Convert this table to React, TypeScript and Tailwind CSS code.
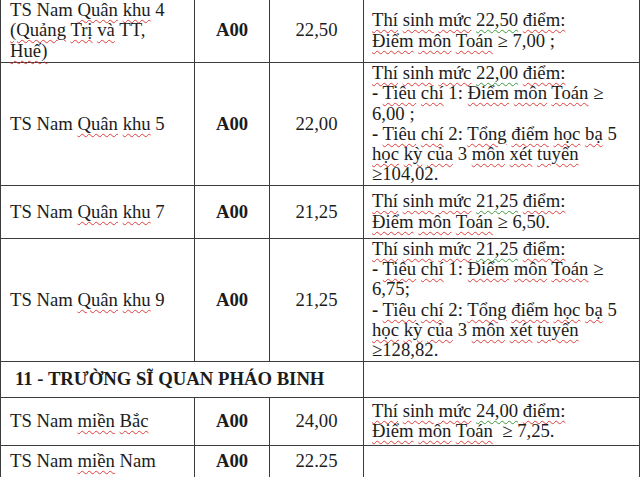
import React from "react"

// red spell-check squiggle under a word
function R({ children }: { children: React.ReactNode }) {
  return (
    <span className="underline decoration-wavy decoration-[#e03c3c] decoration-[1px] underline-offset-[3px]">
      {children}
    </span>
  )
}

// green grammar squiggle
function G({ children }: { children: React.ReactNode }) {
  return (
    <span className="underline decoration-wavy decoration-[#3f9a3f] decoration-[1px] underline-offset-[3px]">
      {children}
    </span>
  )
}

const cell = "border border-[#3c3c3c] align-middle p-0"

function NameCell({ children }: { children: React.ReactNode }) {
  return <td className={`${cell} pl-[9px] whitespace-nowrap`}>{children}</td>
}

function Block() {
  return <td className={`${cell} text-center font-bold`}>A00</td>
}

function Score({ v }: { v: string }) {
  return <td className={`${cell} text-center`}>{v}</td>
}

function Note({ children }: { children?: React.ReactNode }) {
  return <td className={`${cell} pl-[8px] whitespace-nowrap`}>{children}</td>
}

function Head({ v }: { v: string }) {
  return (
    <>
      <R>Thí</R> <R>sinh</R> <R>mức</R> <G>{v}</G> <R>điểm:</R>
    </>
  )
}

function Toan() {
  return (
    <>
      <R>Điểm</R> <R>môn</R> <R>Toán</R>
    </>
  )
}

export default function App() {
  return (
    <div className="w-[640px] h-[477px] overflow-hidden bg-white text-[#1c1c1c] font-['Liberation_Serif','Times_New_Roman',serif] text-[18.7px] leading-[20.3px]">
      <table className="table-fixed border-collapse w-[639px] -mt-[2px]">
        <colgroup>
          <col className="w-[194px]" />
          <col className="w-[75px]" />
          <col className="w-[94px]" />
          <col className="w-[276px]" />
        </colgroup>
        <tbody>
          <tr className="h-[64px]">
            <NameCell>
              TS Nam <R>Quân</R> <R>khu</R> 4
              <br />
              <R>(Quảng</R> <R>Trị</R> <R>và</R> TT,
              <br />
              <R>Huế)</R>
            </NameCell>
            <Block />
            <Score v="22,50" />
            <Note>
              <Head v="22,50" />
              <br />
              <Toan /> ≥ 7,00 ;
            </Note>
          </tr>
          <tr className="h-[122px]">
            <NameCell>
              TS Nam <R>Quân</R> <R>khu</R> 5
            </NameCell>
            <Block />
            <Score v="22,00" />
            <Note>
              <Head v="22,00" />
              <br />
              <b>-</b> <R>Tiêu</R> <R>chí</R> 1: <Toan /> ≥
              <br />
              6,00 ;
              <br />
              <b>-</b> <R>Tiêu</R> <R>chí</R> 2: <R>Tổng</R> <R>điểm</R> <R>học</R> <R>bạ</R> 5
              <br />
              <R>học</R> <R>kỳ</R> <R>của</R> 3 <R>môn</R> <R>xét</R> <R>tuyển</R>
              <br />
              ≥104,02.
            </Note>
          </tr>
          <tr className="h-[53px]">
            <NameCell>
              TS Nam <R>Quân</R> <R>khu</R> 7
            </NameCell>
            <Block />
            <Score v="21,25" />
            <Note>
              <Head v="21,25" />
              <br />
              <Toan /> ≥ 6,50.
            </Note>
          </tr>
          <tr className="h-[122px]">
            <NameCell>
              TS Nam <R>Quân</R> <R>khu</R> 9
            </NameCell>
            <Block />
            <Score v="21,25" />
            <Note>
              <Head v="21,25" />
              <br />
              <b>-</b> <R>Tiêu</R> <R>chí</R> 1: <Toan /> ≥
              <br />
              6,75;
              <br />
              <b>-</b> <R>Tiêu</R> <R>chí</R> 2: <R>Tổng</R> <R>điểm</R> <R>học</R> <R>bạ</R> 5
              <br />
              <R>học</R> <R>kỳ</R> <R>của</R> 3 <R>môn</R> <R>xét</R> <R>tuyển</R>
              <br />
              ≥128,82.
            </Note>
          </tr>
          <tr className="h-[36px]">
            <td colSpan={3} className={`${cell} pl-[14px] font-bold whitespace-nowrap`}>
              11 - TRƯỜNG SĨ QUAN PHÁO BINH
            </td>
            <Note />
          </tr>
          <tr className="h-[48px]">
            <NameCell>
              TS Nam <R>miền</R> <R>Bắc</R>
            </NameCell>
            <Block />
            <Score v="24,00" />
            <Note>
              <Head v="24,00" />
              <br />
              <Toan />
              {"\u00a0 "}≥ 7,25.
            </Note>
          </tr>
          <tr className="h-[33px]">
            <NameCell>
              TS Nam <R>miền</R> Nam
            </NameCell>
            <Block />
            <Score v="22.25" />
            <Note />
          </tr>
        </tbody>
      </table>
    </div>
  )
}
